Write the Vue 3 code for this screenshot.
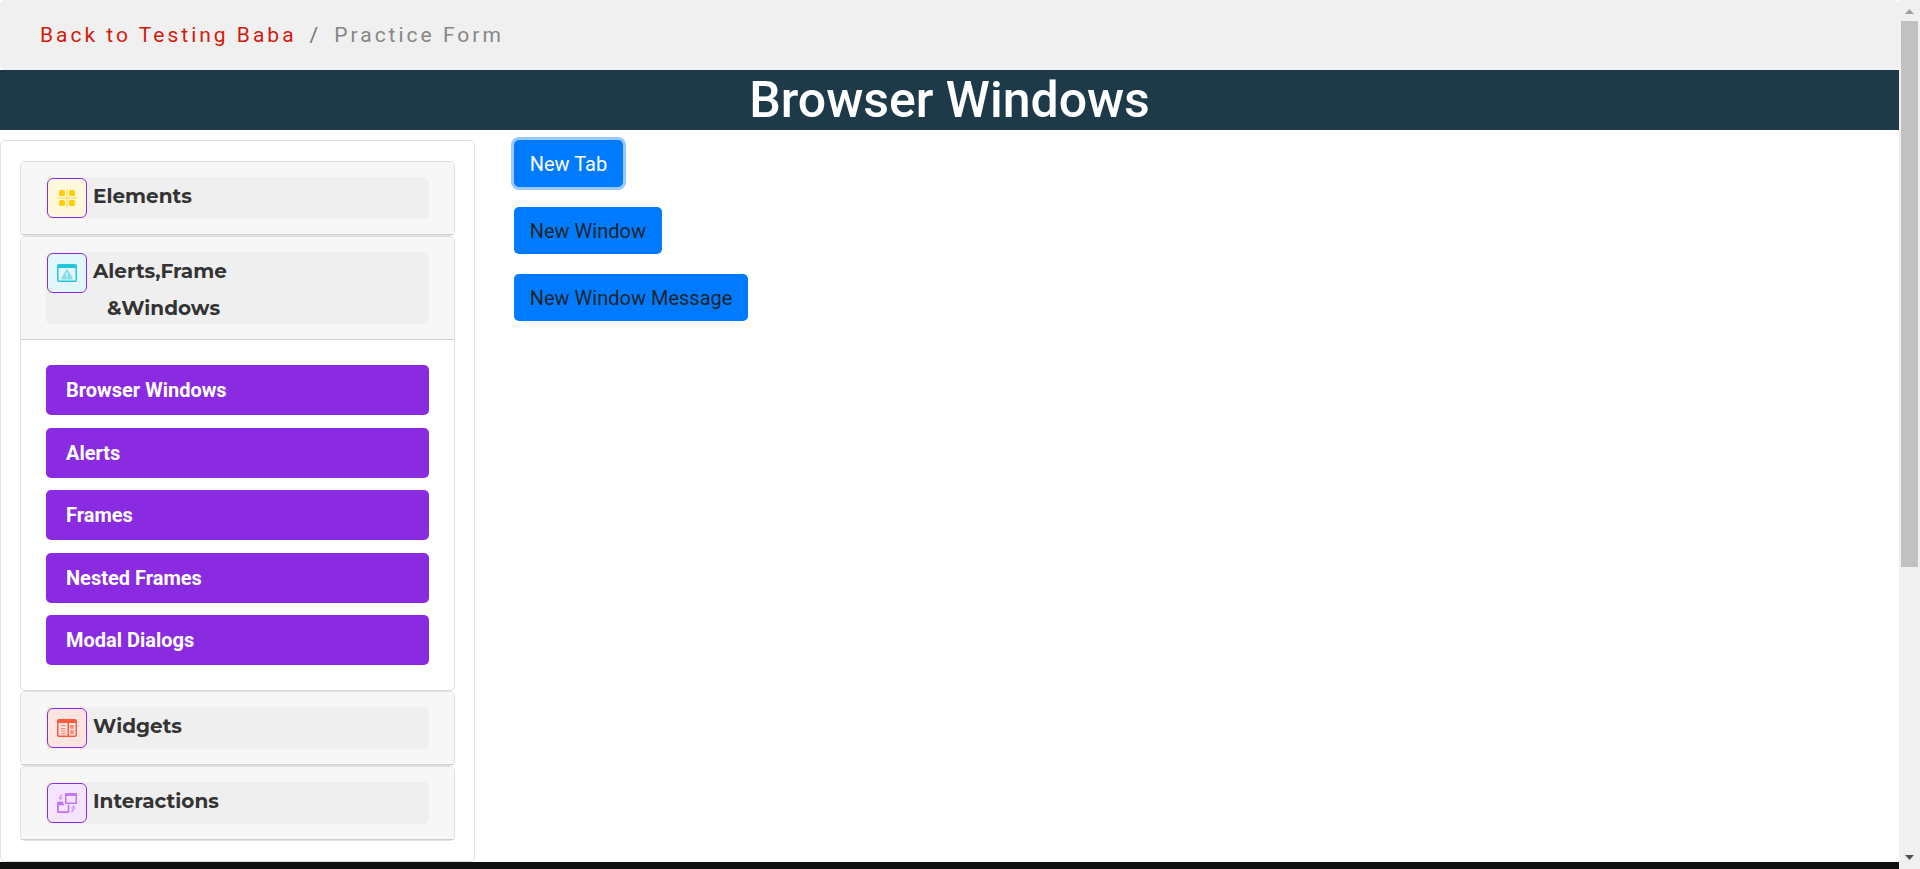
<script setup>
import { ref } from 'vue'

const sections = [
  { id: 'elements', lines: ['Elements'], open: false },
  { id: 'alerts', lines: ['Alerts,Frame', '&Windows'], open: true },
  { id: 'widgets', lines: ['Widgets'], open: false },
  { id: 'interactions', lines: ['Interactions'], open: false },
]
const pages = ['Browser Windows', 'Alerts', 'Frames', 'Nested Frames', 'Modal Dialogs']
const actions = ['New Tab', 'New Window', 'New Window Message']
const active = ref('New Tab')
</script>

<template>
  <div class="shell">
    <div class="page">
      <nav class="crumbs" aria-label="Breadcrumb">
        <a href="#">Back to Testing Baba</a>
        <span class="slash">/</span>
        <span class="current">Practice Form</span>
      </nav>
      <h1 class="title">Browser Windows</h1>

      <div class="content">
        <aside class="sidebar">
          <section v-for="s in sections" :key="s.id" class="card">
            <div class="card-head">
              <button type="button" class="toggle" :aria-expanded="s.open">
                <span class="icon" :class="s.id">
                  <svg v-if="s.id === 'elements'" viewBox="0 0 20 20" fill="#ffd000">
                    <path d="M9 1h2v18H9zM0 9h20v2H0z" opacity=".4" />
                    <rect x="2" y="2" width="6" height="6" rx="1.5" />
                    <rect x="12" y="2" width="6" height="6" rx="1.5" />
                    <rect x="2" y="12" width="6" height="6" rx="1.5" />
                    <rect x="12" y="12" width="6" height="6" rx="1.5" />
                  </svg>
                  <svg v-else-if="s.id === 'alerts'" viewBox="0 0 20 20" fill="#26c6da">
                    <path fill-rule="evenodd" d="M2 1h16a2 2 0 0 1 2 2v14a2 2 0 0 1-2 2H2a2 2 0 0 1-2-2V3a2 2 0 0 1 2-2zM1.500 5v12l.5.5h16l.5-.5V5z" />
                    <path fill-rule="evenodd" opacity=".5" d="M10 6.500c.5 0 .8.3 1 .7l4.600 7.600c.5.8 0 1.700-1 1.700H5.400c-1 0-1.500-.9-1-1.700L9 7.200c.2-.4.5-.7 1-.7zM9.300 9.500v3.200h1.400V9.500zM9.300 13.500v1.400h1.400v-1.400z" />
                  </svg>
                  <svg v-else-if="s.id === 'widgets'" viewBox="0 0 20 20" fill="#ff5a3c">
                    <path fill-rule="evenodd" d="M2 1h16a2 2 0 0 1 2 2v14a2 2 0 0 1-2 2H2a2 2 0 0 1-2-2V3a2 2 0 0 1 2-2zM1.500 5v12l.5.5h8.500V5zM12 5v12.500h6l.5-.5V5z" />
                    <path opacity=".65" d="M4 7h4.500v1.200H4zM4 10h4.500v1.200H4zM4 12.500h4.500v1.200H4zM4 15h4.500v1.200H4zM13.200 7h3.600v3.800h-3.600zM13.200 12.200h3.600V16h-3.600z" />
                  </svg>
                  <svg v-else viewBox="0 0 20 20" fill="#c274fb">
                    <path fill-rule="evenodd" d="M9 0h10a1 1 0 0 1 1 1v9a1 1 0 0 1-1 1H9a1 1 0 0 1-1-1V1a1 1 0 0 1 1-1zM9.500 3v6.500h9V3z" />
                    <path d="M1 9h5v2.300h1V12H1.500v6.500h9.500V12h1v7a1 1 0 0 1-1 1H1a1 1 0 0 1-1-1v-9a1 1 0 0 1 1-1z" stroke="#c274fb" stroke-width=".6" />
                    <path opacity=".6" d="M5.500 1v1.500c-1 0-1.300.2-1.300 1V4h2L3.500 7.500 1 4h1.500v-.5C2.500 2 3.500 1 5.500 1zM14 19.500V18c1 0 1.300-.2 1.300-1v-1.500h-1.500l2.700-3.500 2.700 3.500H17V17c0 1.500-1 2.500-3 2.500z" />
                  </svg>
                </span>
                <span class="label"><span v-for="l in s.lines" :key="l">{{ l }}</span></span>
              </button>
            </div>
            <div v-if="s.open" class="card-body">
              <a v-for="p in pages" :key="p" href="#" class="item">{{ p }}</a>
            </div>
          </section>
        </aside>

        <main class="actions">
          <button
            v-for="a in actions"
            :key="a"
            type="button"
            class="btn"
            :class="{ focused: active === a }"
            @click="active = a"
          >{{ a }}</button>
        </main>
      </div>
      <footer class="footer"></footer>
    </div>

    <div class="scrollbar" aria-hidden="true">
      <svg class="arrow up" viewBox="0 0 9 5"><path d="M0 5L4.500 0 9 5z" /></svg>
      <div class="track"><div class="thumb"></div></div>
      <svg class="arrow" viewBox="0 0 9 5"><path d="M0 0h9L4.500 5z" /></svg>
    </div>
  </div>
</template>

<style>
body {
  margin: 0;
  overflow: hidden;
  background: #fff;
}
</style>

<style scoped>
* {
  box-sizing: border-box;
}
.shell {
  display: flex;
  height: 100vh;
  overflow: hidden;
  font-family: Roboto, "Liberation Sans", sans-serif;
  font-size: 20px;
  color: #212529;
}
.page {
  flex: 1;
  min-width: 0;
  display: flex;
  flex-direction: column;
}
.crumbs {
  display: flex;
  flex: none;
  align-items: center;
  gap: 13px;
  padding: 20px 40px;
  font-size: 21px;
  line-height: 30px;
  letter-spacing: 3px;
  background: #f0f0f0;
  border-radius: 5px;
}
.crumbs a {
  color: #d41a0c;
  text-decoration: none;
}
.slash {
  color: #6c757d;
}
.current {
  color: #868686;
}
.title {
  flex: none;
  margin: 0;
  font-size: 50px;
  font-weight: 500;
  line-height: 60px;
  text-align: center;
  color: #fff;
  background: #1e3948;
}
.content {
  display: flex;
  flex: none;
  padding-top: 10px;
}
.sidebar {
  width: 25%;
  padding: 20px;
  border: 1px solid #dee2e6;
  border-radius: 5px;
}
.card {
  margin: 0 -1px;
  border: 1px solid #dfdfdf;
  border-radius: 5px;
}
.card-head {
  padding: 15px 25px;
  background: #f7f7f7;
  border-bottom: 1px solid #d0d0d0;
  border-radius: 4px 4px 0 0;
}
.toggle {
  display: flex;
  align-items: flex-start;
  gap: 6px;
  width: 100%;
  min-height: 42px;
  padding: 0 1px;
  border: 0;
  border-radius: 5px;
  background: #efefef;
  color: #333;
  font-family: Montserrat, Inter, sans-serif;
  font-size: 20px;
  font-weight: 700;
  text-align: left;
}
.icon {
  display: flex;
  flex: none;
  align-items: center;
  justify-content: center;
  width: 40px;
  height: 40px;
  margin-top: 1px;
  border: 1px solid #8a2be2;
  border-radius: 6px;
}
.icon svg {
  width: 20px;
  height: 20px;
}
.elements {
  background: #fff8dc;
}
.alerts {
  background: #e1f7fa;
}
.widgets {
  background: #ffe5e1;
}
.interactions {
  background: #f4e4fe;
}
.label {
  display: flex;
  flex-direction: column;
  margin: 1px 0 -3px;
  line-height: 37px;
}
.label span + span {
  padding-left: 14px;
}
.card-body {
  display: flex;
  flex-direction: column;
  justify-content: space-between;
  min-height: 350px;
  padding: 25px;
}
.item {
  padding: 10px 20px;
  line-height: 30px;
  font-weight: 700;
  color: #fff;
  text-decoration: none;
  background: #8a2be2;
  border-radius: 5px;
}
.actions {
  display: flex;
  flex: 1;
  flex-direction: column;
  align-items: flex-start;
  gap: 20px;
  padding: 0 39px;
}
.btn {
  padding: 9px 16px 8px;
  border: 0;
  border-radius: 5px;
  font: inherit;
  line-height: 30px;
  color: #212529;
  background: #007bff;
}
.btn.focused {
  color: #fff;
  outline: none;
  box-shadow: 0 0 0 3px #99caff;
}
.footer {
  flex: 1 0 7px;
  background: #101010;
}
.scrollbar {
  display: flex;
  flex: none;
  flex-direction: column;
  align-items: center;
  gap: 7px;
  width: 21px;
  padding: 9px 2px;
  background: #f0f0f0;
}
.arrow {
  flex: none;
  width: 9px;
  height: 5px;
  fill: #505050;
}
.arrow.up {
  fill: #a0a0a0;
}
.track {
  flex: 1;
  align-self: stretch;
}
.thumb {
  height: 66%;
  background: #c1c1c1;
}
</style>
